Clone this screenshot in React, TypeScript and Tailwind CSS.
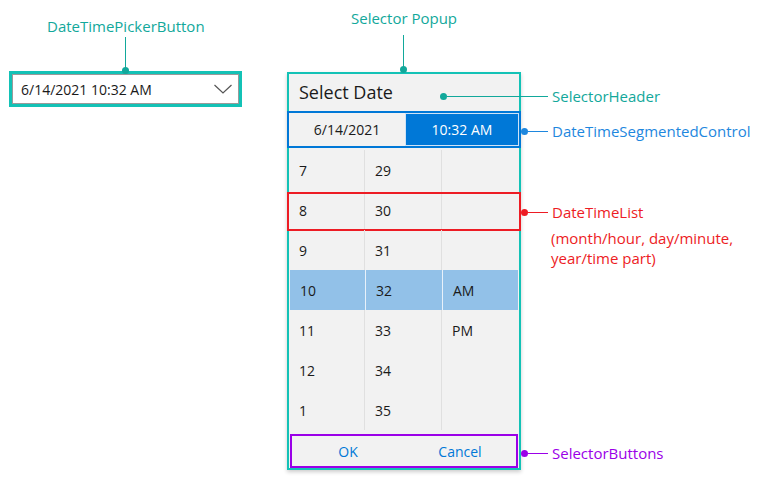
import React from "react";

const rows: [string, string, string][] = [
  ["7", "29", ""],
  ["8", "30", ""],
  ["9", "31", ""],
  ["10", "32", "AM"],
  ["11", "33", "PM"],
  ["12", "34", ""],
  ["1", "35", ""],
];

// annotation: dot + horizontal line + label to the right of the popup
const SideNote: React.FC<{
  top: number;
  dotX: number;
  color: string;
  children: React.ReactNode;
}> = ({ top, dotX, color, children }) => (
  <div
    className="absolute flex items-center"
    style={{ top: top - 10, left: dotX - 3, color }}
  >
    <span className="h-[7px] w-[7px] rounded-full" style={{ background: color }} />
    <span className="h-px" style={{ width: 547 - dotX - 3, background: color }} />
    <span className="pl-[4px] text-[15px] leading-5 whitespace-nowrap">{children}</span>
  </div>
);

export default function App() {
  return (
    <div
      className="relative h-[486px] w-[761px] overflow-hidden bg-white text-[#1a1a1a]"
      style={{ fontFamily: '"Open Sans", "Noto Sans", sans-serif' }}
    >
      <div className="flex items-start pl-[9px] pt-[71px]">
        {/* DateTimePickerButton */}
        <div className="h-[36px] w-[233px] border-[3px] border-[#13c2b6]">
          <div className="flex h-full items-center justify-between border border-[#9a9a9a] bg-white pl-[8px] pr-[5px]">
            <span className="text-[14px]">6/14/2021 10:32 AM</span>
            <svg width="20" height="12" viewBox="0 0 20 12" fill="none">
              <path d="M1.5 2 L10 10 L18.5 2" stroke="#555" strokeWidth="1.2" />
            </svg>
          </div>
        </div>

        {/* Selector popup */}
        <div className="ml-[45px] mt-px flex h-[398px] w-[234px] flex-col border-2 border-[#13c2b6] bg-[#f2f2f2] shadow-[0_2px_4px_rgba(0,0,0,0.2)]">
          <div className="flex h-[37px] items-center pl-[10px] text-[18px]">Select Date</div>

          <div className="-mx-[2px] flex h-[37px] border-2 border-[#0078d7] text-[14px]">
            <div className="flex flex-1 items-center justify-center">6/14/2021</div>
            <div className="flex w-[114px] items-center justify-center border border-[#cfe3f6] bg-[#0078d7] text-white">
              10:32 AM
            </div>
          </div>

          <div className="flex flex-1 flex-col pt-[2px] text-[14px]">
            {rows.map((r, i) => (
              <div
                key={i}
                className={
                  "relative grid h-[40px] grid-cols-[76px_77px_1fr] " +
                  (i === 3 ? "mx-px bg-[#92c1e8]" : "")
                }
              >
                {r.map((c, j) => (
                  <div
                    key={j}
                    className={
                      "flex items-center pl-[10px] " +
                      (j < 2 ? (i === 3 ? "border-r border-[#e8f1fa]" : "border-r border-[#e0e0e0]") : "")
                    }
                  >
                    {c}
                  </div>
                ))}
                {i === 1 && (
                  <div className="absolute -inset-x-[2px] top-[2px] bottom-[-1px] border-2 border-[#ed1c24]" />
                )}
              </div>
            ))}
          </div>

          <div className="flex h-[36px] px-px pt-[2px] text-[14px] text-[#0078d7]">
            <div className="flex flex-1 border-2 border-[#9b00e8]">
              <div className="flex flex-1 items-center justify-center">OK</div>
              <div className="flex flex-1 items-center justify-center">Cancel</div>
            </div>
          </div>
        </div>
      </div>

      {/* top annotations */}
      <div className="absolute left-[47px] top-[16px] text-[15px] leading-5 text-[#12a89b]">DateTimePickerButton</div>
      <div className="absolute left-[125px] top-[37px] h-[31px] w-px bg-[#12a89b]" />
      <div className="absolute left-[122px] top-[67px] h-[7px] w-[7px] rounded-full bg-[#12a89b]" />

      <div className="absolute left-[351px] top-[8px] text-[15px] leading-5 text-[#12a89b]">Selector Popup</div>
      <div className="absolute left-[403px] top-[35px] h-[33px] w-px bg-[#12a89b]" />
      <div className="absolute left-[400px] top-[66px] h-[7px] w-[7px] rounded-full bg-[#12a89b]" />

      <SideNote top={96} dotX={443} color="#12a89b">SelectorHeader</SideNote>
      <SideNote top={131} dotX={524} color="#1e87de">DateTimeSegmentedControl</SideNote>
      <SideNote top={212} dotX={524} color="#ed1c24">DateTimeList</SideNote>
      <div className="absolute left-[551px] top-[228px] text-[15px] leading-5 text-[#ed1c24]">
        (month/hour, day/minute,
        <br />
        year/time part)
      </div>
      <SideNote top={453} dotX={524} color="#9b00e8">SelectorButtons</SideNote>
    </div>
  );
}
